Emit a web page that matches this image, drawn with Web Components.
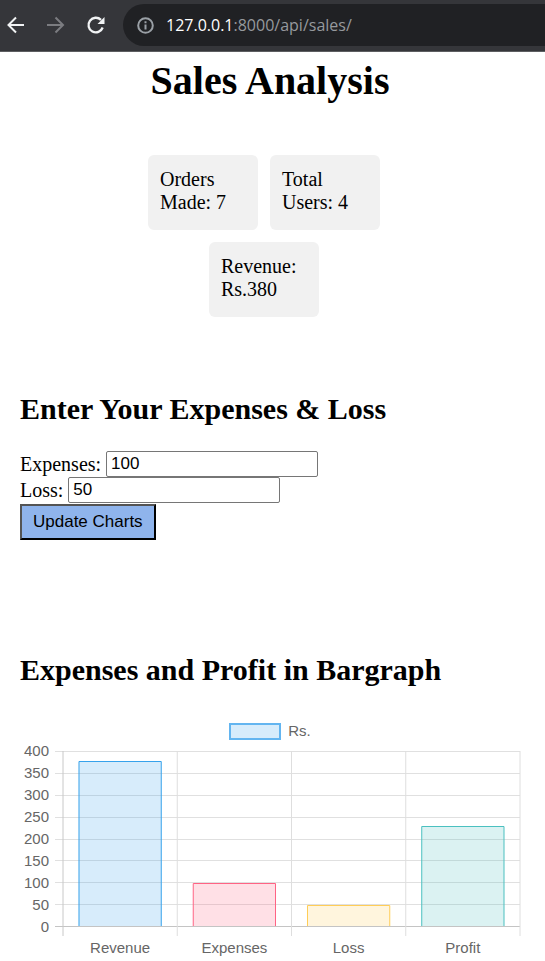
<!DOCTYPE html>
<html lang="en">
<head>
<meta charset="utf-8">
<meta name="viewport" content="width=device-width, initial-scale=1">
<title>Sales Analysis</title>
<style>
  body { margin: 0; background: #fff; color: #000; font: 20px/23px "Liberation Serif", "Times New Roman", serif; }
</style>
</head>
<body>
<sales-page></sales-page>
<script>
const define = (name, html, setup) => customElements.define(name, class extends HTMLElement {
  connectedCallback() {
    if (this.shadowRoot) return;
    this.attachShadow({ mode: 'open' }).innerHTML = html;
    if (setup) setup.call(this, this.shadowRoot);
  }
});

define('browser-bar', `
  <style>
    :host { display: flex; align-items: center; height: 52px; background: #35363a; border-bottom: 1px solid #5d5e61; box-sizing: border-box; overflow: hidden; }
    nav { display: flex; gap: 16px; padding: 0 0 2px 4px; flex: none; width: 123px; box-sizing: border-box; }
    button { all: unset; width: 24px; height: 24px; }
    svg { display: block; fill: none; stroke: #f1f3f4; stroke-width: 2; }
    button:disabled svg { stroke: #7b7c80; }
    .address { flex: 1; display: flex; align-items: center; gap: 12px; height: 42px; margin-bottom: 1px; padding-left: 14px; background: #202124; border-radius: 21px 0 0 21px; }
    .address svg { stroke: #9aa0a6; flex: none; }
    .url { font: 16px/24px "Open Sans", "Noto Sans", sans-serif; color: #96999d; white-space: nowrap; }
    .url b { font-weight: 400; color: #fff; }
  </style>
  <nav aria-label="Browser navigation">
    <button aria-label="Back"><svg width="24" height="24"><path d="M20 12H5M12 4.500 4.500 12l7.500 7.500"/></svg></button>
    <button aria-label="Forward" disabled><svg width="24" height="24"><path d="M3 12h15M11.500 4.500 19 12l-7.500 7.500"/></svg></button>
    <button aria-label="Reload"><svg width="24" height="24"><path d="M17 6.900A7.300 7.300 0 1 0 18.700 14.500" stroke-width="2.300"/><path d="M20.500 4v7h-7z" fill="#f1f3f4" stroke="none"/></svg></button>
  </nav>
  <div class="address">
    <svg width="17" height="17"><circle cx="8.500" cy="8.500" r="7.300"/><path d="M8.500 7.500v5M8.500 4.200v2"/></svg>
    <span class="url"><b><slot name="host"></slot></b><slot name="path"></slot></span>
  </div>`);

define('stat-card', `
  <style>:host { display: block; box-sizing: border-box; width: 110px; min-height: 75px; padding: 13px 12px; background: #f1f1f1; border-radius: 6px; }</style>
  <slot></slot>`);

define('expense-form', `
  <style>
    :host { display: block; }
    form { display: flex; flex-direction: column; align-items: flex-start; }
    .row { display: flex; align-items: center; gap: 5px; height: 26px; }
    .row + .row { margin-bottom: 1px; }
    input { box-sizing: border-box; width: 212px; height: 26px; margin: 0; padding: 0 4px; border: 1px solid #767676; border-radius: 2px; background: #fff; color: #000; font: 17px "Liberation Sans", Arial, sans-serif; }
    button { height: 36px; margin: 0; padding: 0 11px; border: 2px outset #000; border-radius: 0; background: #8fb4ec; color: #000; font: 17px "Liberation Sans", Arial, sans-serif; }
  </style>
  <form>
    <div class="row"><label for="expenses">Expenses:</label><input id="expenses" value="100"></div>
    <div class="row"><label for="loss">Loss:</label><input id="loss" value="50"></div>
    <button type="button">Update Charts</button>
  </form>`);

define('bar-chart', `
  <style>
    :host { display: block; color: #666; font: 15px/20px "Liberation Sans", Arial, sans-serif; }
    .legend { display: flex; justify-content: center; align-items: center; gap: 7px; height: 20px; margin-bottom: 10px; }
    .legend i { box-sizing: border-box; width: 52px; height: 17px; border: 2px solid #63b5f0; background: #d7ecfb; }
    .chart { display: grid; grid-template-columns: 29px minmax(0, 1fr); column-gap: 14px; }
    .scale { display: flex; flex-direction: column; justify-content: space-between; margin: -10px 0; text-align: right; }
    .plot { display: block; width: 100%; height: 176px; overflow: visible; }
    .names { grid-column: 2; display: grid; grid-template-columns: repeat(4, 1fr); padding-top: 11px; text-align: center; }
  </style>
  <div class="legend"><i></i><span>Rs.</span></div>
  <div class="chart"><div class="scale"></div><svg class="plot" role="img" aria-label="Bar graph"></svg><div class="names"></div></div>`,
function (root) {
  const data = [
    ['Revenue', 380, '#36a2eb'], ['Expenses', 100, '#ff6384'],
    ['Loss', 50, '#ffcd56'], ['Profit', 230, '#4bc0c0']
  ];
  const max = 400, step = 50, h = 175;
  const y = v => Math.round(h - v / max * h) + 0.5;
  const line = (x1, y1, x2, y2, c) => `<line x1="${x1}" y1="${y1}" x2="${x2}" y2="${y2}" stroke="${c}"/>`;
  let marks = '', scale = '', names = '';
  for (let v = max; v >= 0; v -= step) {
    scale += `<span>${v}</span>`;
    marks += line(-8, y(v), '100%', y(v), v ? '#e0e0e0' : '#c4c4c4');
  }
  for (let i = 0; i <= 4; i++) marks += line(i * 25 + '%', 0, i * 25 + '%', 185, i ? '#dedede' : '#c8c8c8');
  data.forEach(([name, value, color], i) => {
    const left = i * 25 + 3.5 + '%', right = i * 25 + 21.5 + '%', top = y(value) + 1;
    marks += `<rect x="${left}" y="${top}" width="18%" height="${h - top}" fill="${color}" fill-opacity="0.2"/>`
      + line(left, top, left, h, color) + line(right, top, right, h, color) + line(left, top, right, top, color);
    names += `<span>${name}</span>`;
  });
  root.querySelector('.scale').innerHTML = scale;
  root.querySelector('.plot').innerHTML = marks;
  root.querySelector('.names').innerHTML = names;
});

define('sales-page', `
  <style>
    :host { display: block; }
    main { padding: 6px 25px 0 20px; }
    h1 { margin: 0 0 51px; font-size: 40px; line-height: 46px; text-align: center; }
    h2 { margin: 0 0 25px; font-size: 30px; line-height: 34px; }
    .cards { display: flex; flex-wrap: wrap; justify-content: center; gap: 12px; max-width: 250px; margin: 0 auto 75px; padding-right: 12px; box-sizing: border-box; }
    expense-form { margin-bottom: 113px; }
    h2.graph { margin-bottom: 34px; }
  </style>
  <browser-bar><span slot="host">127.0.0.1</span><span slot="path">:8000/api/sales/</span></browser-bar>
  <main>
    <h1>Sales Analysis</h1>
    <section class="cards">
      <stat-card>Orders Made: 7</stat-card>
      <stat-card>Total Users: 4</stat-card>
      <stat-card>Revenue: Rs.380</stat-card>
    </section>
    <h2>Enter Your Expenses &amp; Loss</h2>
    <expense-form></expense-form>
    <h2 class="graph">Expenses and Profit in Bargraph</h2>
    <bar-chart></bar-chart>
  </main>`);
</script>
</body>
</html>
